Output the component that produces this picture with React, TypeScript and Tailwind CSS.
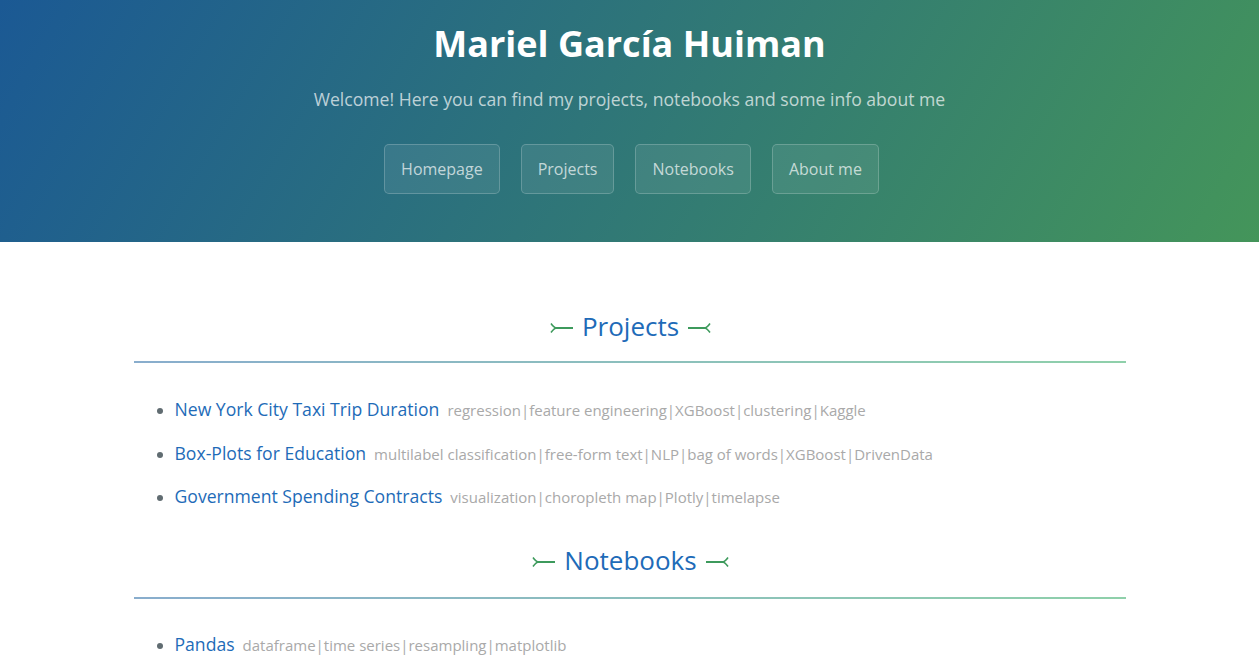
import React from "react";

const ArrowTail = ({ flip = false }: { flip?: boolean }) => (
  <svg
    width="24"
    height="12"
    viewBox="0 0 24 12"
    className={flip ? "-scale-x-100" : ""}
    fill="none"
  >
    <path d="M1 1.5 Q4 5.5 6 6 Q4 6.5 1 10.5" stroke="#3d9a5c" strokeWidth="1.6" />
    <path d="M5 6 H23" stroke="#3d9a5c" strokeWidth="2" />
  </svg>
);

const Section = ({ title, last = false }: { title: string; last?: boolean }) => (
  <div>
    <h2
      className={
        "flex items-center justify-center gap-[8px] text-[26px] leading-[34px] font-normal text-[#1e6bb8] " +
        (last ? "pb-[20px]" : "pb-[18px]")
      }
    >
      <span className="mt-[3px] ml-[2px]"><ArrowTail /></span>
      <span>{title}</span>
      <span className="mt-[3px]"><ArrowTail flip /></span>
    </h2>
    <div className="h-[2px] bg-gradient-to-r from-[#89adcd] to-[#8fd0aa]" />
  </div>
);

type Item = { name: string; tags: string[] };

const List = ({ items, pt }: { items: Item[]; pt: string }) => (
  <ul className={"list-disc pl-[41px] flex flex-col gap-[16.5px] marker:text-[#606c71] " + pt}>
    {items.map((it) => (
      <li key={it.name} className="leading-[27px] text-[#606c71]">
        <a className="text-[17.6px] leading-none text-[#1e6bb8]">{it.name}</a>
        <span className="ml-[8px] text-[15px] leading-none text-[#a9a9a9]">{it.tags.join("|")}</span>
      </li>
    ))}
  </ul>
);

export default function App() {
  return (
    <div
      className="min-h-screen bg-white"
      style={{ fontFamily: '"Open Sans", "Noto Sans", sans-serif' }}
    >
      <header className="h-[242px] bg-[linear-gradient(120deg,#1b5994,#44955a)] text-center pt-[22px]">
        <h1 className="text-[36px] leading-[43px] font-bold text-white">Mariel García Huiman</h1>
        <p className="mt-[21px] text-[17.6px] leading-[27px] text-white/70">
          Welcome! Here you can find my projects, notebooks and some info about me
        </p>
        <nav className="mt-[31px] flex justify-center gap-[21px] pl-[4px]">
          {["Homepage", "Projects", "Notebooks", "About me"].map((b) => (
            <a
              key={b}
              className="px-[16px] py-[12px] text-[16px] leading-[24px] text-white/70 bg-white/[0.08] border border-white/20 rounded-[5px]"
            >
              {b}
            </a>
          ))}
        </nav>
      </header>
      <main className="max-w-[1024px] mx-auto px-4 pt-[67px]">
        <Section title="Projects" />
        <List
          pt="pt-[34px]"
          items={[
            {
              name: "New York City Taxi Trip Duration",
              tags: ["regression", "feature engineering", "XGBoost", "clustering", "Kaggle"],
            },
            {
              name: "Box-Plots for Education",
              tags: ["multilabel classification", "free-form text", "NLP", "bag of words", "XGBoost", "DrivenData"],
            },
            {
              name: "Government Spending Contracts",
              tags: ["visualization", "choropleth map", "Plotly", "timelapse"],
            },
          ]}
        />
        <div className="pt-[32px]">
          <Section title="Notebooks" last />
        </div>
        <List
          pt="pt-[33px]"
          items={[
            { name: "Pandas", tags: ["dataframe", "time series", "resampling", "matplotlib"] },
          ]}
        />
      </main>
    </div>
  );
}
